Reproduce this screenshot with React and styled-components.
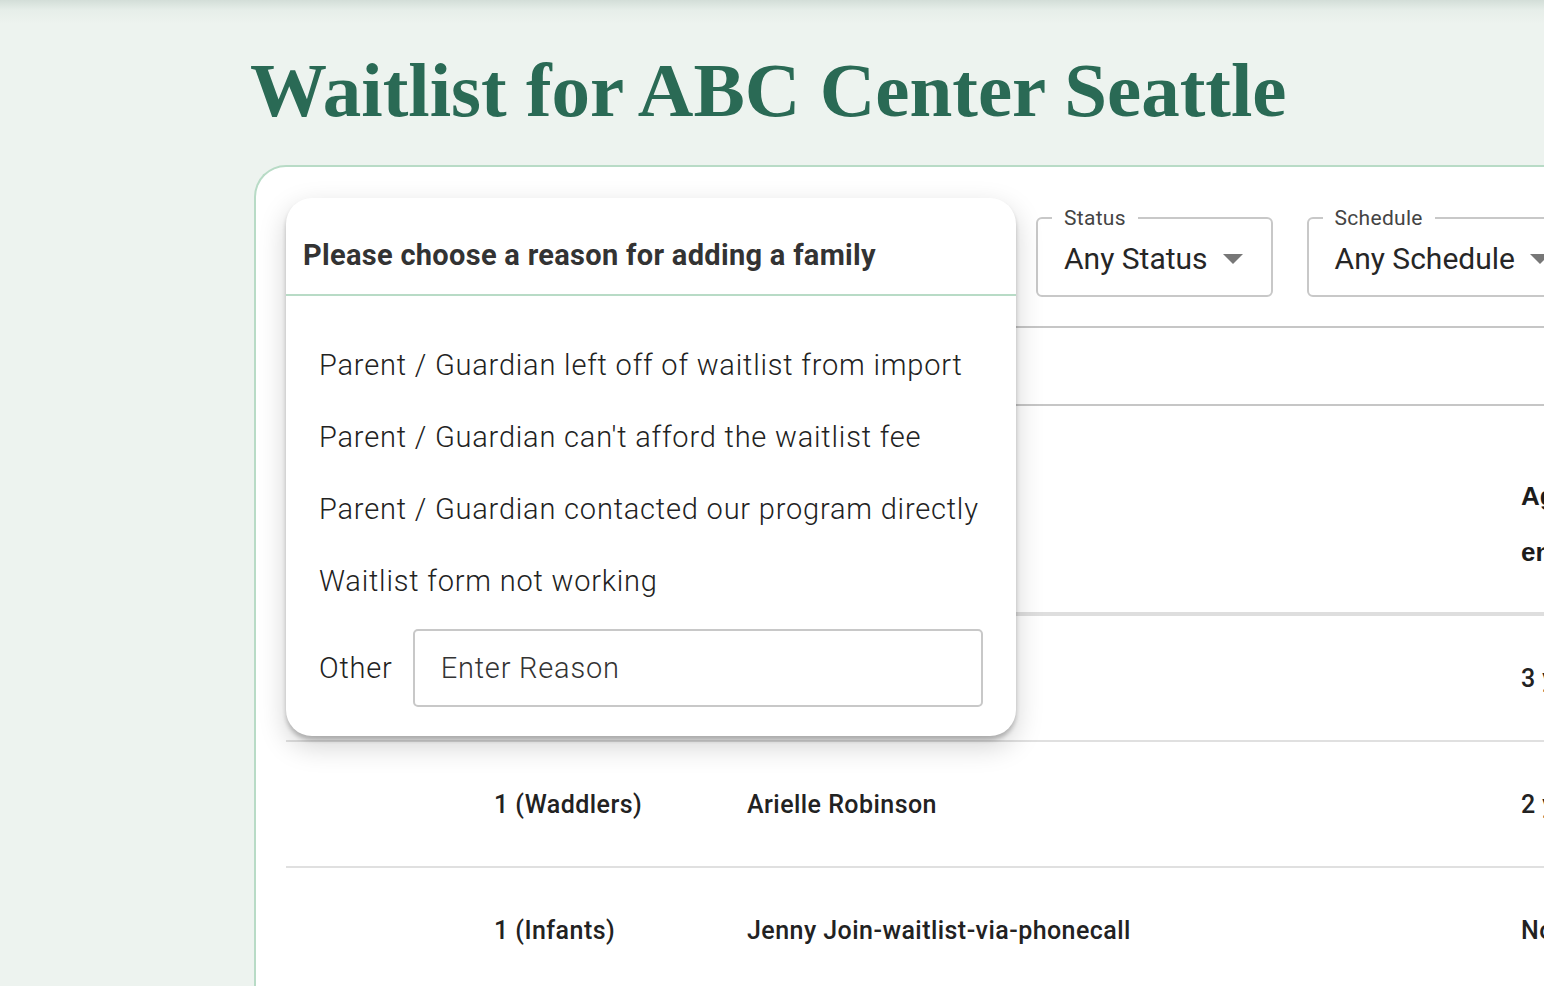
import React from "react";
import styled, { createGlobalStyle } from "styled-components";

const GlobalStyle = createGlobalStyle`
  html, body {
    margin: 0;
    height: 100%;
    overflow: hidden;
  }
  body {
    background: linear-gradient(#d3ded8 0, #e6eee9 10px, #edf3ef 24px) no-repeat, #edf3ef;
    font-family: Roboto, "Liberation Sans", sans-serif;
    color: #222;
  }
`;

const Page = styled.div`
  padding: 52px 0 0 254px;
  height: 100vh;
  box-sizing: border-box;
`;

const Title = styled.h1`
  margin: 0 0 37px -4px;
  font-family: "Liberation Serif", serif;
  font-weight: 700;
  font-size: 77px;
  line-height: 76px;
  color: #2a6a55;
  white-space: nowrap;
`;

const Card = styled.div`
  position: relative;
  width: 1400px;
  min-height: 900px;
  background: #fff;
  border: 2px solid #b8dbc6;
  border-right: none;
  border-bottom: none;
  border-radius: 32px 0 0 0;
  padding: 32px 0 0 30px;
`;

const Toolbar = styled.div`
  display: flex;
  gap: 34px;
  padding: 7px 0 29px 750px;
  border-bottom: 2px solid #c6c6c6;
`;

const Field = styled.fieldset`
  margin: 0;
  min-width: 0;
  padding: 11px 28px 18px 26px;
  border: 2px solid #c8c8c8;
  border-radius: 6px;
  display: flex;
  align-items: center;
  gap: 15px;
`;

const Legend = styled.legend`
  font-size: 21px;
  line-height: 24px;
  color: #444;
  letter-spacing: 0.3px;
  padding: 0 12px;
  margin-left: -12px;
`;

const FieldValue = styled.span`
  font-size: 30px;
  line-height: 36px;
  color: #262626;
  white-space: nowrap;
`;

const Caret = () => (
  <svg width="20" height="10" viewBox="0 0 20 10">
    <path d="M0 0 L20 0 L10 10 Z" fill="#777" />
  </svg>
);

const Band = styled.div`
  height: 76px;
  border-bottom: 2px solid #c6c6c6;
`;

const HeaderRow = styled.div`
  display: grid;
  grid-template-columns: 208px 253px 774px 1fr;
  align-items: end;
  height: 210px;
  box-sizing: border-box;
  padding-bottom: 32px;
  border-bottom: 4px solid #dedede;
`;

const HeadCell = styled.div`
  font-family: "Liberation Sans", Arial, sans-serif;
  font-weight: 700;
  font-size: 26px;
  line-height: 56px;
  color: #1c1c1c;
  width: 120px;
`;

const Row = styled.div`
  display: grid;
  grid-template-columns: 208px 253px 774px 1fr;
  align-items: center;
  height: 124px;
  border-bottom: 2px solid #e0e0e0;
`;

const Cell = styled.div`
  font-size: 25px;
  font-weight: 500;
  letter-spacing: 0.45px;
  color: #222;
  white-space: nowrap;
`;

const Popover = styled.div`
  position: absolute;
  top: 31px;
  left: 30px;
  width: 730px;
  background: #fff;
  border-radius: 26px;
  box-shadow: 0 4px 4px rgba(0, 0, 0, 0.22), 0 10px 28px rgba(0, 0, 0, 0.18);
  overflow: hidden;
`;

const PopoverTitle = styled.div`
  padding: 40px 17px 22px;
  font-size: 29px;
  line-height: 34px;
  font-weight: 700;
  letter-spacing: 0.3px;
  color: #333;
  border-bottom: 2px solid #b8dbc6;
  white-space: nowrap;
`;

const PopoverBody = styled.div`
  padding: 33px 33px 29px;
`;

const Option = styled.div`
  font-size: 29px;
  line-height: 72px;
  font-weight: 300;
  letter-spacing: 0.8px;
  color: #222;
  white-space: nowrap;
  cursor: pointer;
`;

const OtherRow = styled.label`
  display: flex;
  align-items: center;
  gap: 20px;
  margin-top: 12px;
  font-size: 29px;
  font-weight: 300;
  letter-spacing: 0.8px;
  color: #222;
`;

const ReasonInput = styled.input`
  flex: 1;
  min-width: 0;
  height: 78px;
  box-sizing: border-box;
  border: 2px solid #c8c8c8;
  border-radius: 5px;
  padding: 0 26px;
  font-family: inherit;
  font-size: 29px;
  font-weight: 300;
  letter-spacing: 0.8px;
  color: #222;
  outline: none;
  &::placeholder {
    color: #333;
  }
`;

const reasons = [
  "Parent / Guardian left off of waitlist from import",
  "Parent / Guardian can't afford the waitlist fee",
  "Parent / Guardian contacted our program directly",
  "Waitlist form not working",
];

const rows = [
  { pos: "1 (Toddlers)", name: "Marcus Lee", age: "3 years" },
  { pos: "1 (Waddlers)", name: "Arielle Robinson", age: "2 years" },
  { pos: "1 (Infants)", name: "Jenny Join-waitlist-via-phonecall", age: "Not born" },
];

export default function App() {
  return (
    <>
      <GlobalStyle />
      <Page>
        <Title>Waitlist for ABC Center Seattle</Title>
        <Card>
          <Toolbar>
            <Field>
              <Legend>Status</Legend>
              <FieldValue>Any Status</FieldValue>
              <Caret />
            </Field>
            <Field>
              <Legend>Schedule</Legend>
              <FieldValue>Any Schedule</FieldValue>
              <Caret />
            </Field>
          </Toolbar>
          <Band />
          <HeaderRow>
            <div />
            <div />
            <div />
            <HeadCell>Age at enrollment</HeadCell>
          </HeaderRow>
          {rows.map(r => (
            <Row key={r.name}>
              <div />
              <Cell>{r.pos}</Cell>
              <Cell>{r.name}</Cell>
              <Cell>{r.age}</Cell>
            </Row>
          ))}

          <Popover>
            <PopoverTitle>Please choose a reason for adding a family</PopoverTitle>
            <PopoverBody>
              {reasons.map(text => (
                <Option key={text}>{text}</Option>
              ))}
              <OtherRow>
                Other
                <ReasonInput placeholder="Enter Reason" />
              </OtherRow>
            </PopoverBody>
          </Popover>
        </Card>
      </Page>
    </>
  );
}
